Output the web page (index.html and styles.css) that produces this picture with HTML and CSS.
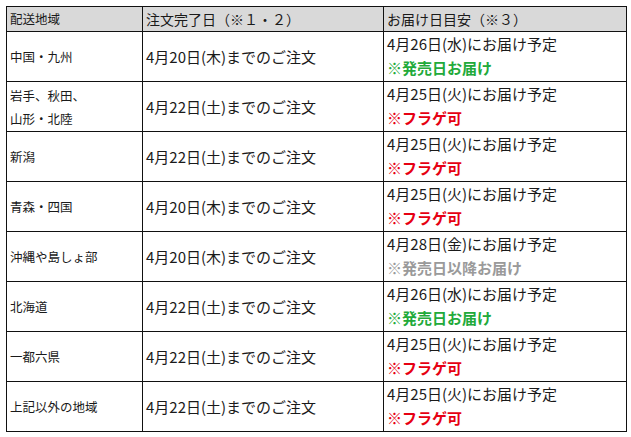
FILE: index.html
```html
<!DOCTYPE html>
<html lang="ja">
<head>
<meta charset="utf-8">
<link rel="stylesheet" href="styles.css">
</head>
<body>
<table class="ship">
  <colgroup>
    <col class="c1"><col class="c2"><col class="c3">
  </colgroup>
  <thead>
    <tr>
      <th class="area">配送地域</th>
      <th>注文完了日（※１・２）</th>
      <th>お届け日目安（※３）</th>
    </tr>
  </thead>
  <tbody>
    <tr>
      <td class="area">中国・九州</td>
      <td class="order">4月20日(木)までのご注文</td>
      <td class="deliv"><div class="line">4月26日(水)にお届け予定</div><div class="line note green">※発売日お届け</div></td>
    </tr>
    <tr>
      <td class="area">岩手、秋田、<br>山形・北陸</td>
      <td class="order">4月22日(土)までのご注文</td>
      <td class="deliv"><div class="line">4月25日(火)にお届け予定</div><div class="line note red">※フラゲ可</div></td>
    </tr>
    <tr>
      <td class="area">新潟</td>
      <td class="order">4月22日(土)までのご注文</td>
      <td class="deliv"><div class="line">4月25日(火)にお届け予定</div><div class="line note red">※フラゲ可</div></td>
    </tr>
    <tr>
      <td class="area">青森・四国</td>
      <td class="order">4月20日(木)までのご注文</td>
      <td class="deliv"><div class="line">4月25日(火)にお届け予定</div><div class="line note red">※フラゲ可</div></td>
    </tr>
    <tr>
      <td class="area">沖縄や島しょ部</td>
      <td class="order">4月20日(木)までのご注文</td>
      <td class="deliv"><div class="line">4月28日(金)にお届け予定</div><div class="line note gray">※発売日以降お届け</div></td>
    </tr>
    <tr>
      <td class="area">北海道</td>
      <td class="order">4月22日(土)までのご注文</td>
      <td class="deliv"><div class="line">4月26日(水)にお届け予定</div><div class="line note green">※発売日お届け</div></td>
    </tr>
    <tr>
      <td class="area">一都六県</td>
      <td class="order">4月22日(土)までのご注文</td>
      <td class="deliv"><div class="line">4月25日(火)にお届け予定</div><div class="line note red">※フラゲ可</div></td>
    </tr>
    <tr>
      <td class="area">上記以外の地域</td>
      <td class="order">4月22日(土)までのご注文</td>
      <td class="deliv"><div class="line">4月25日(火)にお届け予定</div><div class="line note red">※フラゲ可</div></td>
    </tr>
  </tbody>
</table>
</body>
</html>
```

FILE: styles.css
```css
html, body {
  margin: 0;
  padding: 0;
  background: #ffffff;
}
body {
  padding: 6px 0 0 6px;
  font-family: "Noto Sans CJK JP", "Noto Sans", sans-serif;
  color: #1a1a1a;
}
.ship {
  border-collapse: collapse;
  table-layout: fixed;
  width: 620px;
}
.c1 { width: 136px; }
.c2 { width: 241px; }
.c3 { width: 243px; }
.ship th,
.ship td {
  border: 1px solid #111;
  padding: 0 0 0 3px;
  text-align: left;
  vertical-align: middle;
}
.ship th {
  background: #d9d9d9;
  font-weight: normal;
  font-size: 14px;
  height: 24px;
  line-height: 24px;
}
.ship th.area {
  font-size: 12.5px;
}
.ship td {
  height: 49px;
}
.ship td.area {
  font-size: 12.5px;
  line-height: 23px;
}
.ship td.order {
  font-size: 15px;
}
.ship td.deliv {
  font-size: 15px;
  vertical-align: top;
}
.line {
  height: 24px;
  line-height: 24px;
  white-space: nowrap;
}
.note {
  font-weight: bold;
  font-size: 15px;
}
.green { color: #22aa3a; }
.red { color: #e60012; }
.gray { color: #9a9a9a; }
```
